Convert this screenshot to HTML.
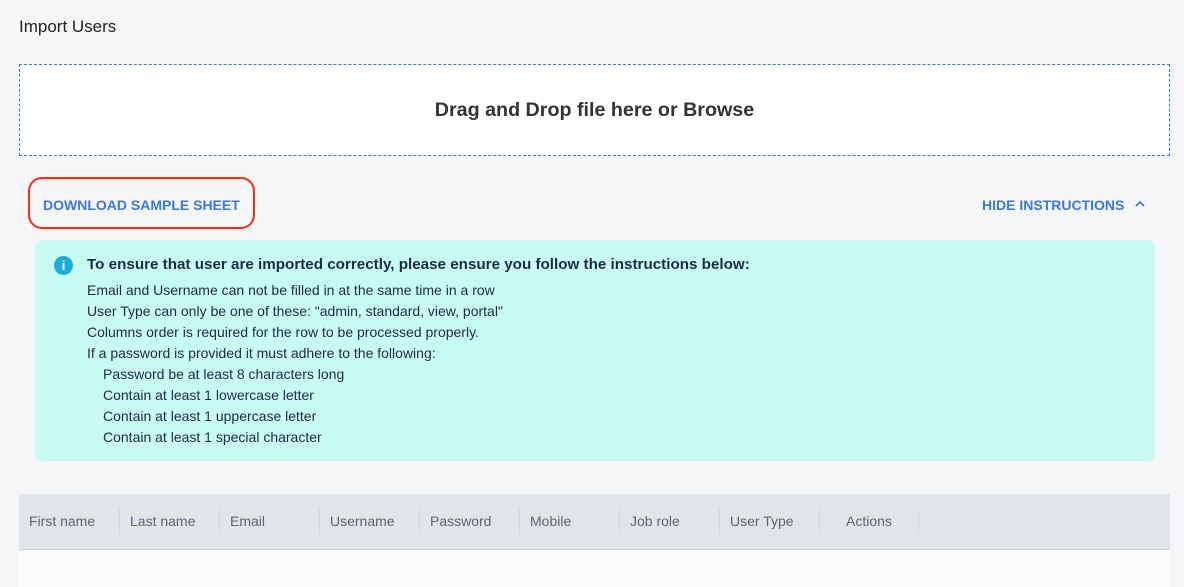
<!DOCTYPE html><html><head><style>
body{margin:0;width:1184px;height:587px;background:#f5f6f8;font-family:"Liberation Sans",sans-serif;position:relative;overflow:hidden;color:#222}
.a{position:absolute}
</style></head><body>
<div class="a" style="left:19px;top:17px;font-size:17px;color:#222">Import Users</div>
<div class="a" style="left:19px;top:64px;width:1149px;height:90px;background:#fff;border:1px dashed #3a78d8;display:flex;align-items:center;justify-content:center;font-size:19.7px;font-weight:bold;color:#333">Drag and Drop file here or Browse</div>
<div class="a" style="left:28px;top:177px;width:227px;height:52px;border:2.5px solid #ff2a12;border-radius:14px;box-sizing:border-box"></div>
<div class="a" style="left:43px;top:197px;font-size:14px;font-weight:bold;color:#3a78e0">DOWNLOAD SAMPLE SHEET</div>
<div class="a" style="left:982px;top:197px;font-size:14px;font-weight:bold;color:#3a78e0">HIDE INSTRUCTIONS</div>
<svg class="a" style="left:1134px;top:199px" width="12" height="10"><path d="M2 7 L6 3 L10 7" stroke="#3a78e0" stroke-width="1.8" fill="none"/></svg>
<div class="a" style="left:35px;top:240px;width:1120px;height:221px;background:#c8fcf2;border-radius:8px"></div>
<div class="a" style="left:54px;top:256px;width:19px;height:19px;border-radius:50%;background:#1ab0d6;color:#fff;font-size:13px;font-weight:bold;text-align:center;line-height:19px">i</div>
<div class="a" style="left:87px;top:256px;font-size:15.2px;font-weight:bold;color:#1e2a44">To ensure that user are imported correctly, please ensure you follow the instructions below:</div>
<div class="a" style="left:87px;top:280px;font-size:14px;line-height:21px;color:#1e2a44">
Email and Username can not be filled in at the same time in a row<br>User Type can only be one of these: "admin, standard, view, portal"<br>Columns order is required for the row to be processed properly.<br>If a password is provided it must adhere to the following:<br>
<div style="padding-left:16px">Password be at least 8 characters long<br>Contain at least 1 lowercase letter<br>Contain at least 1 uppercase letter<br>Contain at least 1 special character</div></div>
<div class="a" style="left:19px;top:494px;width:1151px;height:55px;background:#e1e4e8;border-bottom:1px solid #cfd3d8"></div>
<div class="a" style="left:19px;top:550px;width:1151px;height:37px;background:#fafbfc"></div>
<div class="a" style="left:19px;top:494px;height:55px;display:flex;font-size:14px;color:#5c6670">
<div style="width:100px;padding-left:10px;box-sizing:border-box;margin:15px 0;line-height:25px">First name</div>
<div style="width:100px;padding-left:10px;box-sizing:border-box;border-left:1px solid #d3d7dc;margin:15px 0;line-height:25px">Last name</div>
<div style="width:100px;padding-left:10px;box-sizing:border-box;border-left:1px solid #d3d7dc;margin:15px 0;line-height:25px">Email</div>
<div style="width:100px;padding-left:10px;box-sizing:border-box;border-left:1px solid #d3d7dc;margin:15px 0;line-height:25px">Username</div>
<div style="width:100px;padding-left:10px;box-sizing:border-box;border-left:1px solid #d3d7dc;margin:15px 0;line-height:25px">Password</div>
<div style="width:100px;padding-left:10px;box-sizing:border-box;border-left:1px solid #d3d7dc;margin:15px 0;line-height:25px">Mobile</div>
<div style="width:100px;padding-left:10px;box-sizing:border-box;border-left:1px solid #d3d7dc;margin:15px 0;line-height:25px">Job role</div>
<div style="width:100px;padding-left:10px;box-sizing:border-box;border-left:1px solid #d3d7dc;margin:15px 0;line-height:25px">User Type</div>
<div style="width:100px;padding-left:26px;box-sizing:border-box;border-left:1px solid #d3d7dc;border-right:1px solid #d3d7dc;margin:15px 0;line-height:25px">Actions</div>
</div>
</body></html>
